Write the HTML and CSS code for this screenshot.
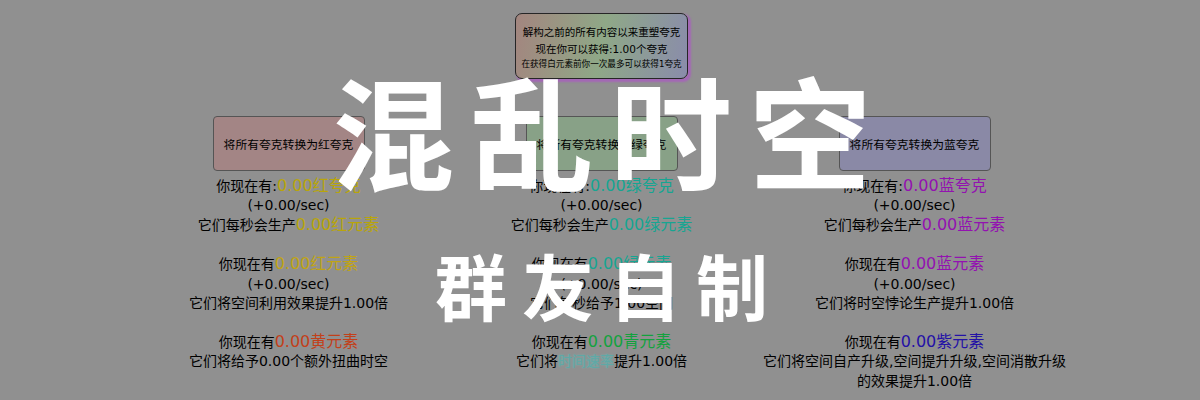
FILE: index.html
```html
<!DOCTYPE html>
<html lang="zh">
<head>
<meta charset="utf-8">
<title>混乱时空</title>
<link rel="stylesheet" href="styles.css">
</head>
<body>
<div class="page">
  <div class="reforge">
    <div class="r1">解构之前的所有内容以来重塑夸克</div>
    <div class="r2">现在你可以获得:1.00个夸克</div>
    <div class="r3">在获得白元素前你一次最多可以获得1夸克</div>
  </div>

  <div class="columns">
    <div class="col">
      <button class="conv conv-red">将所有夸克转换为红夸克</button>
      <p class="sec">你现在有:<span class="v c-gold">0.00红夸克</span><br>(+0.00/sec)<br>它们每秒会生产<span class="v c-gold">0.00红元素</span></p>
      <p class="sec">你现在有<span class="v c-gold2">0.00红元素</span><br>(+0.00/sec)<br>它们将空间利用效果提升1.00倍</p>
      <p class="sec">你现在有<span class="v c-orange">0.00黄元素</span><br>它们将给予0.00个额外扭曲时空</p>
    </div>
    <div class="col">
      <button class="conv conv-green">将所有夸克转换为绿夸克</button>
      <p class="sec">你现在有:<span class="v c-teal">0.00绿夸克</span><br>(+0.00/sec)<br>它们每秒会生产<span class="v c-teal">0.00绿元素</span></p>
      <p class="sec">你现在有<span class="v c-teal">0.00绿元素</span><br>(+0.00/sec)<br>它们每秒给予1.00空间</p>
      <p class="sec">你现在有<span class="v c-green">0.00青元素</span><br>它们将<span class="c-glow">时间速率</span>提升1.00倍</p>
    </div>
    <div class="col">
      <button class="conv conv-blue">将所有夸克转换为蓝夸克</button>
      <p class="sec">你现在有:<span class="v c-purple">0.00蓝夸克</span><br>(+0.00/sec)<br>它们每秒会生产<span class="v c-purple">0.00蓝元素</span></p>
      <p class="sec">你现在有<span class="v c-purple">0.00蓝元素</span><br>(+0.00/sec)<br>它们将时空悖论生产提升1.00倍</p>
      <p class="sec">你现在有<span class="v c-indigo">0.00紫元素</span><br>它们将空间自产升级,空间提升升级,空间消散升级的效果提升1.00倍</p>
    </div>
  </div>
</div>

<div class="banner">
  <div class="banner-title">混乱时空</div>
  <div class="banner-sub">群友自制</div>
</div>
</body>
</html>
```

FILE: styles.css
```css
html, body {
  margin: 0;
  padding: 0;
}

body {
  width: 1200px;
  height: 400px;
  overflow: hidden;
  background: #909090;
  color: #000;
  font-family: "DejaVu Sans", "Noto Sans CJK SC", sans-serif;
  position: relative;
}

.page {
  padding: 13px 0 0 3px;
  display: flex;
  flex-direction: column;
  align-items: center;
}

.reforge {
  box-sizing: border-box;
  width: 173px;
  height: 66px;
  padding-top: 10px;
  border: 1.5px solid #262626;
  border-radius: 7px;
  background: linear-gradient(100deg, #a3857f 0%, #8fa887 50%, #8a8cab 100%);
  box-shadow: 2px 2px 2px 1px #a468b6;
  text-align: center;
  white-space: nowrap;
}

.r1, .r2 {
  font-size: 10.5px;
  line-height: 17px;
}

.r3 {
  font-size: 8.6px;
  line-height: 13px;
}

.columns {
  margin-top: 37px;
  display: grid;
  grid-template-columns: repeat(3, 313px);
}

.col {
  display: flex;
  flex-direction: column;
  align-items: center;
  text-align: center;
}

.conv {
  box-sizing: border-box;
  width: 152px;
  height: 55px;
  margin: 0 0 4.5px;
  padding: 0;
  border: 1px solid #555;
  border-radius: 4px;
  font-family: "DejaVu Sans", "Noto Sans CJK SC", sans-serif;
  font-size: 11.8px;
  color: #000;
  white-space: nowrap;
}

.conv-red { background: #a38585; }
.conv-green { background: #88a187; }
.conv-blue { background: #8a89a6; }

.sec {
  margin: 0 0 19.2px;
  font-size: 14px;
  line-height: 19.2px;
}

.v {
  font-size: 16px;
}

.c-gold { color: #b9a50a; }
.c-gold2 { color: #c0a414; }
.c-orange { color: #c2401a; }
.c-teal { color: #17a592; }
.c-green { color: #13a23e; }
.c-glow { color: #5fa8a6; text-shadow: 0 0 2px #6fb8b4; }
.c-purple { color: #9312b0; }
.c-indigo { color: #2412a6; }

.banner {
  position: absolute;
  top: 67px;
  left: 0;
  width: 1200px;
  display: flex;
  flex-direction: column;
  align-items: center;
  color: #fff;
  font-family: "Noto Sans CJK SC", sans-serif;
  font-weight: 700;
  pointer-events: none;
}

.banner-title {
  font-size: 122px;
  line-height: 122px;
  letter-spacing: 17px;
  padding-left: 20px;
}

.banner-sub {
  margin-top: 59px;
  font-size: 72px;
  line-height: 72px;
  letter-spacing: 15px;
  padding-left: 18px;
}
```
